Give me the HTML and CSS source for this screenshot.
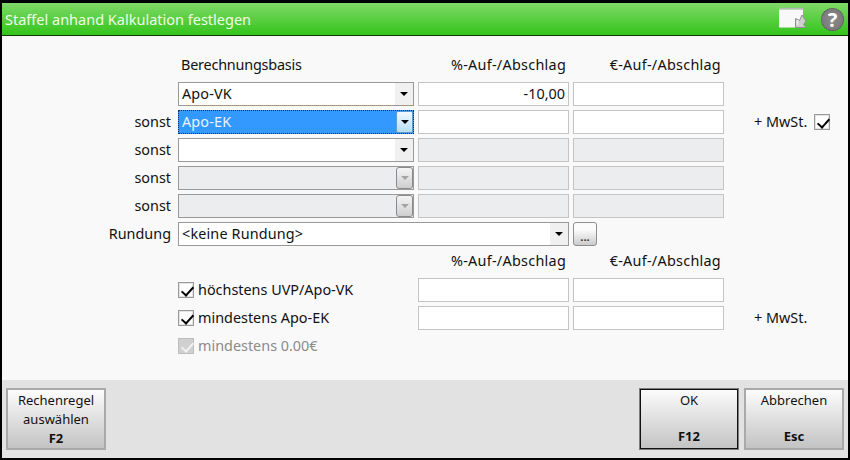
FILE: index.html
```html
<!DOCTYPE html>
<html lang="de">
<head>
<meta charset="utf-8">
<title>Staffel anhand Kalkulation festlegen</title>
<link rel="stylesheet" href="styles.css">
</head>
<body>
<div class="window">
  <header class="titlebar">
    <span class="title">Staffel anhand Kalkulation festlegen</span>
    <svg class="win-icon" width="30" height="22" viewBox="0 0 30 22">
      <path d="M1 2.500h24v18H1z" fill="#f8f8f8"/>
      <path d="M1 1.500h24" stroke="#b9b9b9" stroke-width="1.500"/>
      <path d="M17.500 11.500v9h10.500l-2.500-3 2.500-3.500-4-6-2.500 5.500z" fill="#cfcfcf" stroke="#8f8f8f"/>
      <path d="M19.500 13v5" stroke="#eeeeee" stroke-width="1.500"/>
    </svg>
    <span class="help">?</span>
  </header>
  <main class="form">
    <span></span><span class="head first">Berechnungsbasis</span><span class="head num wide-text">%-Auf-/Abschlag</span><span class="head num wide-text">€-Auf-/Abschlag</span><span></span>

    <span></span>
    <div class="combo"><span class="val">Apo-VK</span><span class="arrow"><i class="tri"></i></span></div>
    <div class="field num">-10,00</div><div class="field"></div><span></span>

    <span class="lab">sonst</span>
    <div class="combo focus"><span class="val">Apo-EK</span><span class="arrow"><i class="tri"></i></span></div>
    <div class="field"></div><div class="field"></div>
    <div class="mwst">+ MwSt. <span class="check on"></span></div>

    <span class="lab">sonst</span>
    <div class="combo"><span class="val"></span><span class="arrow"><i class="tri"></i></span></div>
    <div class="field off"></div><div class="field off"></div><span></span>

    <span class="lab">sonst</span>
    <div class="combo disabled"><span class="val"></span><span class="arrow"><i class="tri"></i></span></div>
    <div class="field off"></div><div class="field off"></div><span></span>

    <span class="lab">sonst</span>
    <div class="combo disabled"><span class="val"></span><span class="arrow"><i class="tri"></i></span></div>
    <div class="field off"></div><div class="field off"></div><span></span>

    <span class="lab">Rundung</span>
    <div class="combo wide"><span class="val">&lt;keine Rundung&gt;</span><span class="arrow"><i class="tri"></i></span></div>
    <div class="dots-cell"><button class="dots">...</button></div><span></span>

    <span></span><span></span><span class="head num wide-text">%-Auf-/Abschlag</span><span class="head num wide-text">€-Auf-/Abschlag</span><span></span>

    <span></span>
    <label class="opt"><span class="check on"></span>höchstens UVP/Apo-VK</label>
    <div class="field"></div><div class="field"></div><span></span>

    <span></span>
    <label class="opt"><span class="check on"></span>mindestens Apo-EK</label>
    <div class="field"></div><div class="field"></div>
    <div class="mwst">+ MwSt.</div>

    <span></span>
    <label class="opt muted"><span class="check on dim"></span>mindestens 0.00€</label>
    <span></span><span></span><span></span>
  </main>
  <footer class="footer">
    <button class="btn"><span>Rechenregel<br>auswählen</span><b>F2</b></button>
    <button class="btn default push"><span>OK</span><b>F12</b></button>
    <button class="btn"><span>Abbrechen</span><b>Esc</b></button>
  </footer>
</div>
</body>
</html>
```
FILE: styles.css
```css
* { box-sizing: border-box; }
html, body { margin: 0; height: 100%; }
body { font-family: "Noto Sans", "Open Sans", sans-serif; font-size: 14.4px; color: #111; }
.window {
  width: 850px; height: 460px; display: flex; flex-direction: column;
  border: solid #000; border-width: 3px 2px 2px; background: #f9f9f9;
}
.titlebar {
  height: 33px; flex: none; display: flex; align-items: center; padding: 0 4px 0 3px;
  background: linear-gradient(#7fd968, #33c41b); border-bottom: 1px solid #0b3a05;
}
.title { color: #eefde8; font-size: 14.5px; flex: 1; }
.win-icon { margin-right: 13px; margin-top: -3px; }
.help {
  width: 23px; height: 23px; border-radius: 50%; background: radial-gradient(#8c8c8c, #747474); border: 1px dotted #4f4f4f;
  color: #fff; font-weight: 700; font-size: 20px; line-height: 21px; text-align: center;
}
.form {
  flex: 1; display: grid; padding-top: 18px;
  grid-template-columns: 172px 236px 151px 151px 1fr;
  grid-auto-rows: 24px; column-gap: 4px; row-gap: 4px;
}
.head { line-height: 22px; white-space: nowrap; }
.head.first { padding-left: 3px; letter-spacing: -.2px; }
.wide-text { letter-spacing: .27px; }
.num { text-align: right; padding-right: 3px; }
.lab { text-align: right; line-height: 23px; padding-right: 3px; }
.combo {
  display: flex; border: 1px solid #999; background: #fff; height: 24px; box-shadow: inset 0 0 0 1px #fff;
}
.combo.wide { grid-column: span 2; }
.val { flex: 1; padding-left: 3px; line-height: 21px; letter-spacing: .15px; }
.arrow { width: 18px; background: #f0f0f0; display: flex; align-items: center; justify-content: center; }
.tri { width: 0; height: 0; border: solid transparent; border-width: 4px 4px 0; border-top-color: #000; }
.combo.focus { border: 1px dotted #12305a; background: #3399ff; box-shadow: none; }
.combo.focus .val { color: #e8f3ff; }
.combo.focus .arrow {
  width: 17px; margin: 0 0 0 1px; background: linear-gradient(#f2f9fe, #b6def8); border: 1px solid #5d9ccc; border-radius: 2px;
}
.combo.disabled { background: #ebedef; box-shadow: none; }
.combo.disabled .arrow {
  width: 17px; background: linear-gradient(#f4f4f4, #cfcfcf); border: 1px solid #8a8a8a; border-radius: 3px;
}
.combo.disabled .tri { border-top-color: #a3a3a3; }
.field { border: 1px solid #c4c4c4; background: #fff; height: 24px; line-height: 21px; }
.field.off { background: #ebedef; }
.dots-cell { display: flex; }
.dots {
  width: 24px; height: 24px; padding: 5px 0 0; font: inherit; font-size: 11px; font-weight: 700; line-height: 14px; color: #333;
  background: linear-gradient(#fbfbfb 30%, #cbcbcb); border: 1px solid #8f8f8f; border-radius: 3px;
}
.mwst { display: flex; align-items: center; gap: 7px; padding-left: 26px; padding-bottom: 1px; color: #111; white-space: nowrap; }
.check { width: 16px; height: 16px; border: 1px solid #9a9a9a; background: #fff; box-shadow: inset 0 0 0 1px #e4e4e4; flex: none; position: relative; display: inline-block; }
.mwst .check { margin-top: 1px; }
.check.on::after {
  content: ""; position: absolute; left: 5px; top: 1px; width: 5px; height: 10px;
  border: solid #000; border-width: 0 2.5px 2.5px 0; transform: rotate(42deg);
}
.check.dim { background: #d0d0d0; border-color: #bdbdbd; box-shadow: none; }
.check.dim::after { border-color: #f2f2f2; }
.opt { display: flex; align-items: center; gap: 4px; white-space: nowrap; padding-bottom: 1px; }
.opt .check { margin-top: 1px; }
.opt.muted { color: #8b8b8b; }
.footer {
  height: 78px; flex: none; display: flex; gap: 5px; padding: 8px 4px; background: #e2e2e2;
}
.btn {
  width: 100px; height: 62px; padding: 1px 0 2px; font: inherit; font-size: 13px; line-height: 19px; color: #111;
  display: flex; flex-direction: column; justify-content: space-between; align-items: center;
  background: linear-gradient(#fcfcfc, #c3c3c3); border: 2px solid #a9a9a9;
}
.btn b { font-weight: 700; }
.push { margin-left: auto; }
.default { border: 1px solid #7c7c7c; box-shadow: inset 0 0 0 1px #111; padding: 2px 0 3px; }
```
